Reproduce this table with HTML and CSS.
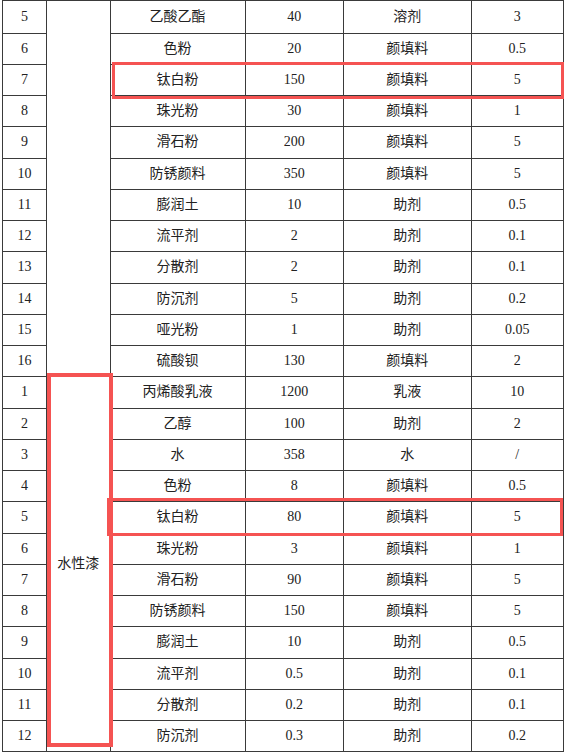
FILE: index.html
```html
<!DOCTYPE html>
<html lang="zh">
<head>
<meta charset="utf-8">
<link rel="stylesheet" href="styles.css">
</head>
<body>
<div class="sheet">
  <table class="grid">
    <colgroup>
      <col class="c1"><col class="c2"><col class="c3"><col class="c4"><col class="c5"><col class="c6">
    </colgroup>
    <tbody>
      <tr class="first"><td>5</td><td rowspan="12"></td><td>乙酸乙酯</td><td>40</td><td>溶剂</td><td>3</td></tr>
      <tr><td>6</td><td>色粉</td><td>20</td><td>颜填料</td><td>0.5</td></tr>
      <tr><td>7</td><td>钛白粉</td><td>150</td><td>颜填料</td><td>5</td></tr>
      <tr><td>8</td><td>珠光粉</td><td>30</td><td>颜填料</td><td>1</td></tr>
      <tr><td>9</td><td>滑石粉</td><td>200</td><td>颜填料</td><td>5</td></tr>
      <tr><td>10</td><td>防锈颜料</td><td>350</td><td>颜填料</td><td>5</td></tr>
      <tr><td>11</td><td>膨润土</td><td>10</td><td>助剂</td><td>0.5</td></tr>
      <tr><td>12</td><td>流平剂</td><td>2</td><td>助剂</td><td>0.1</td></tr>
      <tr><td>13</td><td>分散剂</td><td>2</td><td>助剂</td><td>0.1</td></tr>
      <tr><td>14</td><td>防沉剂</td><td>5</td><td>助剂</td><td>0.2</td></tr>
      <tr><td>15</td><td>哑光粉</td><td>1</td><td>助剂</td><td>0.05</td></tr>
      <tr><td>16</td><td>硫酸钡</td><td>130</td><td>颜填料</td><td>2</td></tr>
      <tr><td>1</td><td rowspan="12" class="kind">水性漆</td><td>丙烯酸乳液</td><td>1200</td><td>乳液</td><td>10</td></tr>
      <tr><td>2</td><td>乙醇</td><td>100</td><td>助剂</td><td>2</td></tr>
      <tr><td>3</td><td>水</td><td>358</td><td>水</td><td>/</td></tr>
      <tr><td>4</td><td>色粉</td><td>8</td><td>颜填料</td><td>0.5</td></tr>
      <tr><td>5</td><td>钛白粉</td><td>80</td><td>颜填料</td><td>5</td></tr>
      <tr><td>6</td><td>珠光粉</td><td>3</td><td>颜填料</td><td>1</td></tr>
      <tr><td>7</td><td>滑石粉</td><td>90</td><td>颜填料</td><td>5</td></tr>
      <tr><td>8</td><td>防锈颜料</td><td>150</td><td>颜填料</td><td>5</td></tr>
      <tr><td>9</td><td>膨润土</td><td>10</td><td>助剂</td><td>0.5</td></tr>
      <tr><td>10</td><td>流平剂</td><td>0.5</td><td>助剂</td><td>0.1</td></tr>
      <tr><td>11</td><td>分散剂</td><td>0.2</td><td>助剂</td><td>0.1</td></tr>
      <tr><td>12</td><td>防沉剂</td><td>0.3</td><td>助剂</td><td>0.2</td></tr>
    </tbody>
  </table>
  <div class="mark mark-row1"></div>
  <div class="mark mark-kind"></div>
  <div class="mark mark-row2"></div>
</div>
</body>
</html>
```

FILE: styles.css
```css
html, body {
  margin: 0;
  padding: 0;
  background: #ffffff;
}

.sheet {
  position: relative;
  width: 564px;
  height: 753px;
  overflow: hidden;
  padding-left: 2px;
  box-sizing: border-box;
}

.grid {
  border-collapse: collapse;
  table-layout: fixed;
  width: 561px;
  font-family: "Liberation Serif", "Noto Sans CJK SC", serif;
  font-size: 14px;
  color: #222222;
}

.c1 { width: 44px; }
.c2 { width: 63.5px; }
.c3 { width: 135px; }
.c4 { width: 98.5px; }
.c5 { width: 127.5px; }
.c6 { width: 92.5px; }

.grid td {
  border: 1px solid #3a3a3a;
  text-align: center;
  vertical-align: middle;
  padding: 0;
  height: 30.25px;
  line-height: 16px;
  overflow: hidden;
  white-space: nowrap;
}

.grid tr.first td {
  height: 31.5px;
}

.mark {
  position: absolute;
  border-style: solid;
  border-color: #f55352;
  box-sizing: border-box;
  pointer-events: none;
}

.mark-row1 {
  left: 112px;
  top: 62px;
  width: 452px;
  height: 36.5px;
  border-width: 3.5px;
}

.mark-kind {
  left: 47px;
  top: 373px;
  width: 66px;
  height: 374px;
  border-width: 4px;
}

.mark-row2 {
  left: 107px;
  top: 497.5px;
  width: 456px;
  height: 38.5px;
  border-width: 3.5px;
}
```
